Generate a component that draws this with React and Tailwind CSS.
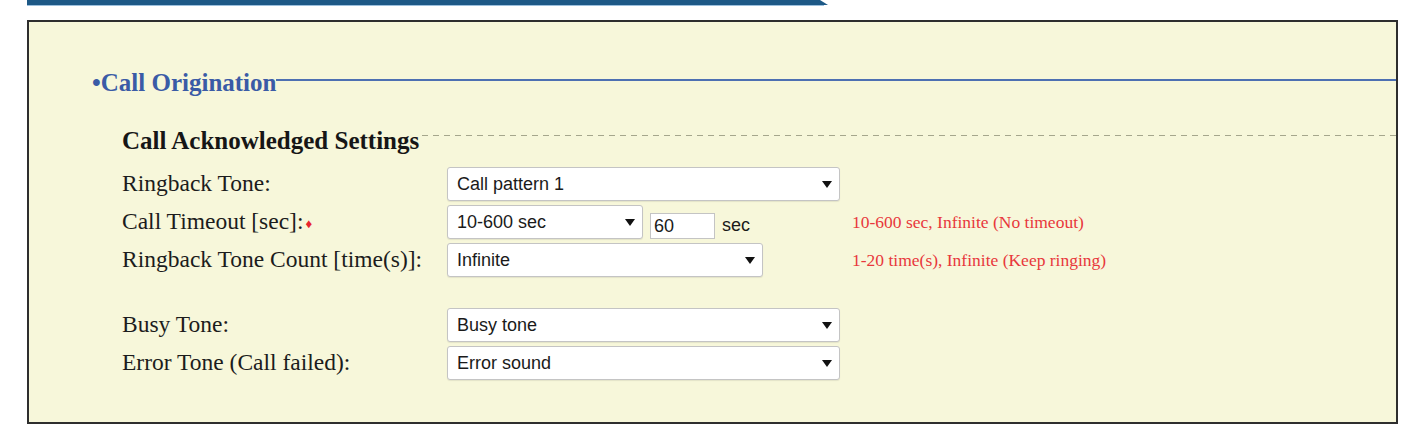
import React from 'react';

const serif = "font-['Liberation_Serif','Times_New_Roman',serif]";
const sans = "font-['Liberation_Sans',Arial,sans-serif]";

function Arrow() {
    return (
        <svg width="10" height="7" viewBox="0 0 10 7" className="shrink-0">
            <path d="M0 0 L10 0 L5 7 Z" fill="#111" />
        </svg>
    );
}

function Select({ value, width }) {
    return (
        <div
            className={`flex h-[34px] items-center justify-between rounded-[3px] border border-[#c4c4c4] bg-white pl-[9px] pr-[7px] text-[18px] text-[#1a1a1a] shadow-[0_1px_1px_rgba(0,0,0,0.08)] ${sans}`}
            style={{ width }}
        >
            <span>{value}</span>
            <Arrow />
        </div>
    );
}

function Row({ label, required, children, help }) {
    return (
        <div className="flex h-[34px] items-center">
            <div className={`w-[325px] shrink-0 text-[23.5px] text-[#1c1c1c] ${serif}`}>
                {label}
                {required && <span className="ml-[2px] align-middle text-[13px] text-[#e8262e]">♦</span>}
            </div>
            <div className="flex w-[405px] shrink-0 items-center">{children}</div>
            {help && <div className={`text-[17.5px] text-[#e8383c] ${serif}`}>{help}</div>}
        </div>
    );
}

export default function App() {
    return (
        <div className="h-[444px] w-[1424px] overflow-hidden bg-white">
            {/* header strip */}
            <div className="ml-[27px] w-[801px]">
                <div className="h-[5px] bg-[#1d5986] [clip-path:polygon(0_0,99%_0,100%_100%,0_100%)]" />
                <div className="h-[1px] w-[797px] bg-[#9cc0dd]" />
            </div>

            <div className="ml-[27px] mt-[14px] h-[404px] w-[1371px] border-2 border-[#2e2e2e] bg-[#f7f7da] pt-[46px]">
                {/* section title */}
                <div className="flex h-[28px] items-center pl-[63px]">
                    <span className={`text-[25px] font-bold leading-none text-[#3a5ba6] ${serif}`}>•Call Origination</span>
                    <div className="mb-[5px] h-[2px] flex-1 bg-[#4d70b2]" />
                </div>

                <div className="ml-[93px] mt-[30px]">
                    {/* group title */}
                    <div className="flex h-[28px] items-center">
                        <span className={`text-[25px] font-bold leading-none text-[#161616] ${serif}`}>Call Acknowledged Settings</span>
                        <div className="mb-[9px] ml-[3px] h-[1.5px] flex-1 bg-[repeating-linear-gradient(to_right,#a5a68c_0_6px,transparent_6px_11px)]" />
                    </div>

                    <div className="mt-[13px] flex flex-col gap-[4px]">
                        <Row label="Ringback Tone:">
                            <Select value="Call pattern 1" width={393} />
                        </Row>
                        <Row label="Call Timeout [sec]:" required help="10-600 sec, Infinite (No timeout)">
                            <Select value="10-600 sec" width={196} />
                            <div className={`ml-[7px] mt-[8px] flex h-[26px] w-[65px] items-center border border-[#c4c4c4] bg-white pl-[3px] text-[18px] text-[#1a1a1a] ${sans}`}>
                                60
                            </div>
                            <span className={`ml-[7px] mt-[6px] text-[18px] text-[#1a1a1a] ${sans}`}>sec</span>
                        </Row>
                        <Row label="Ringback Tone Count [time(s)]:" help="1-20 time(s), Infinite (Keep ringing)">
                            <Select value="Infinite" width={316} />
                        </Row>
                    </div>

                    <div className="mt-[31px] flex flex-col gap-[4px]">
                        <Row label="Busy Tone:">
                            <Select value="Busy tone" width={393} />
                        </Row>
                        <Row label="Error Tone (Call failed):">
                            <Select value="Error sound" width={393} />
                        </Row>
                    </div>
                </div>
            </div>
        </div>
    );
}
